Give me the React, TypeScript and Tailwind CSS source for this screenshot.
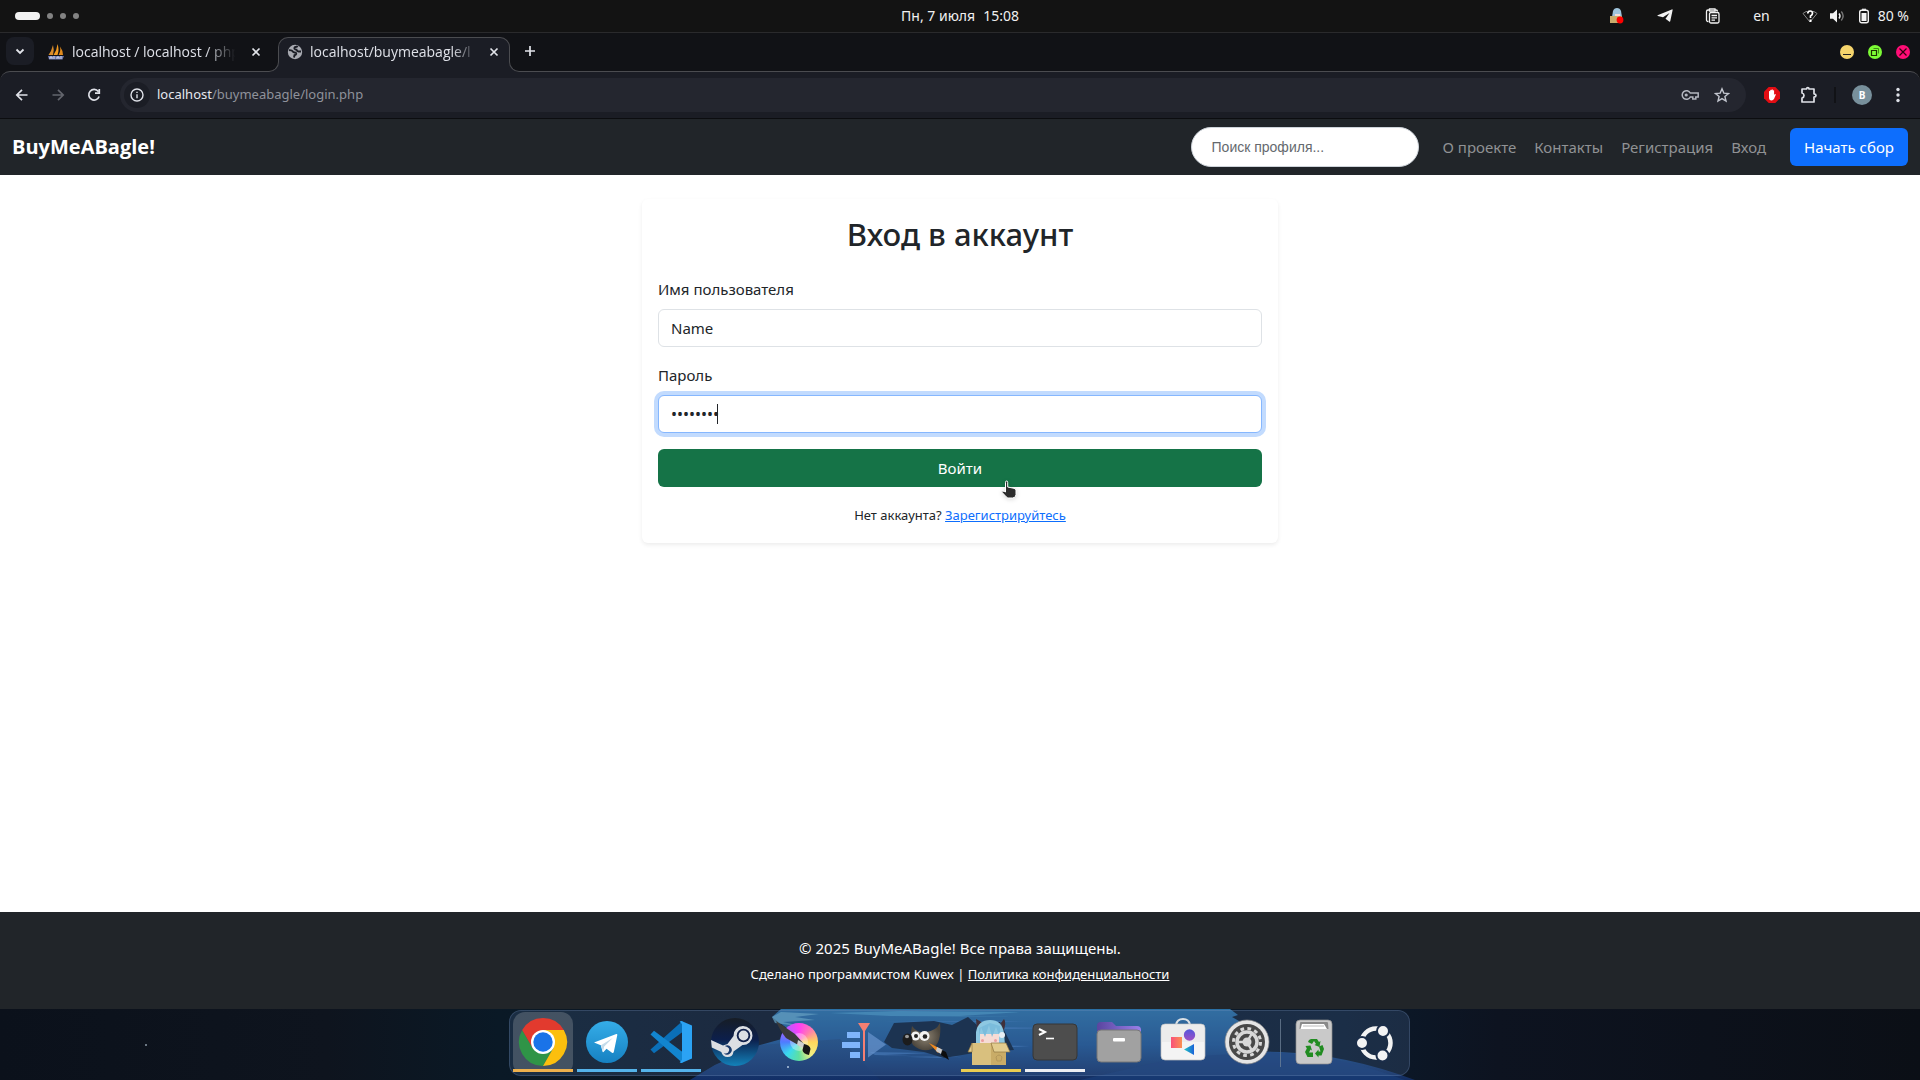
import React, { useState } from "react";

function TopBar() {
  return (
    <header className="grid h-8 shrink-0 grid-cols-3 items-center bg-[#131313] px-[15px] text-sm text-[#f0f0f0]">
      <div className="flex items-center gap-[7px]">
        <span className="h-2 w-[25px] rounded-full bg-[#f2f2f2]" />
        <span className="h-1.5 w-1.5 rounded-full bg-[#828282]" />
        <span className="h-1.5 w-1.5 rounded-full bg-[#828282]" />
        <span className="h-1.5 w-1.5 rounded-full bg-[#828282]" />
      </div>
      <div className="flex justify-center gap-2">
        <span>Пн, 7 июля</span>
        <span>15:08</span>
      </div>
      <div className="-mr-1 flex items-center justify-end">
        <svg className="mr-8 h-4 w-4" viewBox="0 0 16 16">
          <path d="M3 9 4 3Q5 0 8 0T12 3l1 6Z" fill="#9fc4dc" />
          <path d="M6 6h5v3H6Z" fill="#f2ddd6" />
          <path d="M1 8h12v7H1Z" fill="#c9ac6c" />
          <circle cx="11" cy="12" r="3.4" fill="#f00" />
        </svg>
        <svg className="mr-8 h-4 w-4" viewBox="0 0 16 16" fill="#f2f2f2">
          <path d="M.6 7.200 14.800 1.400q1-.3.8.8L13.300 13q-.3 1-1.200.4L8.500 10.700 12.500 5 6 9.200.8 7.900Q0 7.600.6 7.200Z" />
        </svg>
        <svg className="mr-8 h-4 w-4" viewBox="0 0 16 16" fill="none" stroke="#f2f2f2" strokeWidth="1.3">
          <path d="M3.500 13.500h-.5A1.500 1.500 0 0 1 1.500 12V3.500A1.500 1.500 0 0 1 3 2h1.500M10 2h1Q12.500 2 12.500 3.500M4.500 3V1H10v2Z" />
          <rect x="4.500" y="4.500" width="9.500" height="10.500" rx="1.500" />
          <path d="M6.500 7.500H12M6.500 9.800H12M6.500 12.100h3.500" />
        </svg>
        <span className="mr-8">en</span>
        <svg className="mr-3 h-4 w-4" viewBox="0 0 16 16" fill="none" stroke="#8a8a8a" strokeWidth="1">
          <path d="M5 3.300Q3 3.800 1 5.500l7 8.500 7-8.500Q13 3.800 11 3.300" />
          <path d="M5.800 5.500Q5.800 3 8.200 3t2.300 2.300Q10.500 7 8.500 8v2" stroke="#fff" strokeWidth="1.700" />
          <path d="M7.500 11.500h2v2.500h-2Z" fill="#fff" stroke="none" />
        </svg>
        <svg className="mr-3 h-4 w-4" viewBox="0 0 16 16" fill="none">
          <path d="M0 5.200h3L7 1.500v13L3 10.800H0Z" fill="#f2f2f2" />
          <path d="M9 5.500Q11 8 9 10.500" stroke="#f2f2f2" strokeWidth="1.400" />
          <path d="M11.300 3.500Q15 8 11.300 12.500" stroke="#777" strokeWidth="1.400" />
        </svg>
        <svg className="mr-2 h-4 w-3" viewBox="0 0 12 16" fill="none">
          <rect x="1.700" y="2.200" width="8.600" height="12.600" rx="2" stroke="#f2f2f2" strokeWidth="1.400" />
          <rect x="3.500" y="5" width="5" height="8" fill="#f2f2f2" />
          <path d="M4 .7h4v1.200H4Z" fill="#f2f2f2" />
        </svg>
        <span>80 %</span>
      </div>
    </header>
  );
}

function CloseIcon() {
  return (
    <svg className="h-4 w-4" viewBox="0 0 16 16" stroke="#e2e4ea" strokeWidth="1.700">
      <path d="m4.500 4.500 7 7m0-7-7 7" />
    </svg>
  );
}

function TabStrip() {
  return (
    <div className="flex h-[39px] shrink-0 items-end border-t border-[#2a2a2c] bg-[#111216] pl-1.5 font-['Open_Sans',sans-serif] text-sm text-[#dfe1e8]">
      <button aria-label="Поиск вкладок" className="mb-1.5 flex h-7 w-7 items-center justify-center rounded-lg bg-[#1b1d25]">
        <svg className="h-4 w-4" viewBox="0 0 16 16" fill="none" stroke="#e2e4ea" strokeWidth="1.800">
          <path d="m4.500 6.500 3.500 3.500 3.500-3.500" />
        </svg>
      </button>
      <div className="ml-3.5 flex h-[34px] w-[230px] items-center pb-1">
        <svg className="mr-2 h-4 w-4 shrink-0" viewBox="0 0 16 16">
          <path d="M5 1Q6.500 6 5 11H.5Q3.500 7 5 1Z" fill="#d98c2b" />
          <path d="M9.500 0q2 6 0 11H5.500Q9 6 9.500 0Z" fill="#f29b20" />
          <path d="M12 2.500q3 4 3 8.500h-4.500Q13 7 12 2.500Z" fill="#e08a1e" />
          <path d="M0 12h16l-1.500 3.500H1Z" fill="#6c78af" />
          <path d="M2 15v-2h2v2m2 0v-3m3 3v-2h2v2m2 0v-3" stroke="#d6daea" fill="none" />
        </svg>
        <span className="w-[167px] whitespace-nowrap [mask-image:linear-gradient(to_right,black_80%,transparent_98%)]">
          localhost / localhost / php
        </span>
        <button aria-label="Закрыть вкладку" className="ml-auto mr-[14px]">
          <CloseIcon />
        </button>
      </div>
      <div className="relative z-10 -mb-px flex h-[35px] w-[232px] items-center rounded-t-[10px] border border-b-0 border-[#4b4c50] bg-[#1b1d25] pb-[7px] pl-2">
        <span className="absolute -left-[10px] bottom-0 h-[10px] w-[10px] bg-[#1b1d25]">
          <span className="block h-full w-full rounded-br-[10px] border-b border-r border-[#4b4c50] bg-[#111216]" />
        </span>
        <span className="absolute -right-[10px] bottom-0 h-[10px] w-[10px] bg-[#1b1d25]">
          <span className="block h-full w-full rounded-bl-[10px] border-b border-l border-[#4b4c50] bg-[#111216]" />
        </span>
        <svg className="mr-[7px] h-4 w-4 shrink-0" viewBox="0 0 16 16">
          <circle cx="8" cy="8" r="7.200" fill="#a9abb2" />
          <path d="M2 6.200q3-.2 3.500 1t2 1.300q2 .2 1.700 1.500-.3 1-1.700 1.200l-.5 2.300M10.500 1.800q-.3 1.200-1.800 1.200-1.700.3-1.200 1.700.7 1 2 1 .5 1.800 2 1.800h2.500" fill="none" stroke="#1b1d25" strokeWidth="1.900" />
        </svg>
        <span className="w-[167px] whitespace-nowrap [mask-image:linear-gradient(to_right,black_85%,transparent)]">
          localhost/buymeabagle/l
        </span>
        <button aria-label="Закрыть вкладку" className="ml-auto mr-[7px]">
          <CloseIcon />
        </button>
      </div>
      <button aria-label="Новая вкладка" className="mb-3 ml-3">
        <svg className="h-4 w-4" viewBox="0 0 16 16" stroke="#e2e4ea" strokeWidth="1.700">
          <path d="M8 3v10M3 8h10" />
        </svg>
      </button>
      <div className="mb-3 ml-auto mr-[10px] flex gap-[14px]">
        <button aria-label="Свернуть" className="h-[14px] w-[14px]">
          <svg viewBox="0 0 14 14">
            <circle cx="7" cy="7" r="7" fill="#f5d46c" />
            <path d="M3 9.500h8" stroke="#222" />
          </svg>
        </button>
        <button aria-label="Развернуть" className="h-[14px] w-[14px]">
          <svg viewBox="0 0 14 14" fill="none" stroke="#1c3000">
            <circle cx="7" cy="7" r="7" fill="#7cfb35" stroke="none" />
            <path d="M3.500 5.500h5v5h-5Z" strokeWidth="1.200" />
            <path d="M5.500 3.500h5v5" stroke="#408a18" />
          </svg>
        </button>
        <button aria-label="Закрыть" className="h-[14px] w-[14px]">
          <svg viewBox="0 0 14 14">
            <circle cx="7" cy="7" r="7" fill="#ff0d76" />
            <path d="m3.500 3.500 7 7m0-7-7 7" stroke="#30000f" strokeWidth="1.200" />
          </svg>
        </button>
      </div>
    </div>
  );
}

function Toolbar() {
  return (
    <div className="shrink-0 bg-[#111216]">
      <div className="flex h-12 items-center rounded-t-[10px] border-b border-t border-b-[#0c0d10] border-t-[#4b4c50] bg-[#1b1d25] pl-3 pr-3">
        <button aria-label="Назад" className="mr-4">
          <svg className="h-5 w-5" viewBox="0 0 20 20" fill="none" stroke="#dfe1e8" strokeWidth="1.700">
            <path d="M15.500 10h-10M10 4.800 4.800 10l5.200 5.200" />
          </svg>
        </button>
        <button aria-label="Вперёд" className="mr-4">
          <svg className="h-5 w-5" viewBox="0 0 20 20" fill="none" stroke="#63656d" strokeWidth="1.700">
            <path d="M4.500 10h10M10 4.800l5.200 5.200-5.200 5.200" />
          </svg>
        </button>
        <button aria-label="Обновить" className="mr-4">
          <svg className="h-5 w-5" viewBox="0 0 20 20" fill="none" stroke="#dfe1e8" strokeWidth="1.700">
            <path d="M14.300 6.500A5.300 5.300 0 1 0 15.100 11.500M15.300 4v4.200H11" />
          </svg>
        </button>
        <div className="flex h-[34px] flex-1 items-center rounded-full bg-[#24262f] pl-1 pr-4">
          <button aria-label="Сведения о сайте" className="mr-[7px] flex h-[26px] w-[26px] items-center justify-center rounded-full bg-[#1b1d25]">
            <svg className="h-4 w-4" viewBox="0 0 16 16" fill="none" stroke="#dfe1e8" strokeWidth="1.400">
              <circle cx="8" cy="8" r="6" />
              <path d="M8 7.200v4M8 4.700v1.400" />
            </svg>
          </button>
          <span className="flex-1 text-[13px] text-[#8f929b]">
            <span className="text-[#e6e8ef]">localhost</span>/buymeabagle/login.php
          </span>
          <button aria-label="Пароли" className="mr-[15px]">
            <svg className="h-[18px] w-[18px]" viewBox="0 0 18 18" fill="none" stroke="#b3b6bf" strokeWidth="1.500">
              <path d="M9.300 7A4.300 4.300 0 1 0 9.300 11h2.500v2h3v-2h2.400V7Z" />
              <circle cx="5.200" cy="9" r="1.600" fill="#b3b6bf" stroke="none" />
            </svg>
          </button>
          <button aria-label="Добавить в закладки">
            <svg className="h-4 w-4" viewBox="0 0 16 16" fill="none" stroke="#c2c5ce" strokeWidth="1.400">
              <path d="m8 1.800 1.800 4.300 4.700.4-3.600 3 1.100 4.600L8 11.600l-4 2.500 1.100-4.600-3.600-3 4.700-.4Z" />
            </svg>
          </button>
        </div>
        <button aria-label="AdBlock" className="ml-[18px]">
          <svg className="h-4 w-4" viewBox="0 0 16 16">
            <path d="M4.700 0h6.600L16 4.700v6.600L11.300 16H4.700L0 11.300V4.700Z" fill="#e30d13" />
            <path d="M5 8.500V4.300q.6-.7 1.200 0V3.200q.6-.8 1.300 0v-.5q.7-.7 1.300 0v.8q.7-.6 1.300 0V8l.8-1q.9-.2.900.7l-1.700 4.100q-.8 1.600-2.600 1.600Q5 13.400 5 10.500Z" fill="#fff" />
          </svg>
        </button>
        <button aria-label="Расширения" className="ml-5">
          <svg className="h-[18px] w-[18px]" viewBox="0 0 18 18" fill="none" stroke="#dfe1e8" strokeWidth="1.700">
            <path d="M2 3h4.500q.2-1.300 1.300-1.300T9.100 3H14v4.800q2 .3 2 1.700t-2 1.700V16H2v-4q2-.5 2-2.500T2 7Z" strokeLinejoin="round" />
          </svg>
        </button>
        <span className="ml-4 h-4 w-0.5 bg-[#111216]" />
        <button aria-label="Профиль" className="ml-4 flex h-5 w-5 items-center justify-center rounded-full bg-[#78909c] text-[10px] font-bold text-white">
          B
        </button>
        <button aria-label="Меню" className="ml-4">
          <svg className="h-5 w-5" viewBox="0 0 20 20" fill="#dfe1e8">
            <circle cx="10" cy="4.500" r="1.700" />
            <circle cx="10" cy="10" r="1.700" />
            <circle cx="10" cy="15.500" r="1.700" />
          </svg>
        </button>
      </div>
    </div>
  );
}

function SiteNav() {
  return (
    <nav className="flex h-14 shrink-0 items-center bg-[#212529] px-3 text-[15px] text-[#909294]">
      <a href="#" className="mr-auto font-['Open_Sans',sans-serif] text-xl font-bold text-white">
        BuyMeABagle!
      </a>
      <input
        type="search"
        aria-label="Поиск профиля"
        placeholder="Поиск профиля..."
        className="mr-6 h-10 w-[228px] rounded-full border border-[#ced4da] bg-white px-5 font-['Liberation_Sans',sans-serif] text-sm text-[#212529] placeholder:text-[#65696e]"
      />
      <div className="flex gap-[18px]">
        <a href="#">О проекте</a>
        <a href="#">Контакты</a>
        <a href="#">Регистрация</a>
        <a href="#">Вход</a>
      </div>
      <a href="#" className="ml-6 flex h-[38px] items-center rounded-md bg-[#0d6efd] px-3.5 text-white">
        Начать сбор
      </a>
    </nav>
  );
}

function LoginCard() {
  const [name, setName] = useState("Name");
  const [password, setPassword] = useState("password");
  return (
    <form
      onSubmit={(e) => e.preventDefault()}
      className="relative mx-auto mt-6 w-[636px] max-w-full rounded-md bg-white p-4 text-[15px] text-[#212529] shadow-[0_2px_4px_rgba(0,0,0,0.075)]"
    >
      <h2 className="mb-6 text-center text-[31px] font-medium leading-[38px]">Вход в аккаунт</h2>
      <label htmlFor="username" className="mb-2 block leading-6">
        Имя пользователя
      </label>
      <input
        id="username"
        value={name}
        onChange={(e) => setName(e.target.value)}
        className="mb-4 block h-[38px] w-full rounded-md border border-[#dee2e6] bg-white px-3 leading-6"
      />
      <label htmlFor="password" className="mb-2 block leading-6">
        Пароль
      </label>
      <div className="relative mb-4">
        <input
          id="password"
          type="password"
          value={password}
          onChange={(e) => setPassword(e.target.value)}
          className="block h-[38px] w-full rounded-md border border-[#86b7fe] bg-white px-3 text-base leading-6 outline-none ring-4 ring-[#c2dbfe]"
        />
        <span className="absolute left-[59px] top-[9px] h-5 w-px bg-[#212529]" />
      </div>
      <div className="relative">
        <button type="submit" className="block h-[38px] w-full rounded-md bg-[#157347] text-white">
          Войти
        </button>
        <svg className="absolute left-[342px] top-[31px] h-5 w-[18px] drop-shadow-sm" viewBox="0 0 18 20">
          <path
            d="M5.500 12V2.300Q5.500 1 6.600 1T7.700 2.300V7l6.300 1.300q2 .5 2 2.400v3.800q0 3.500-3.500 3.500H8.700q-1.500 0-2.500-1.200L1.700 12q.9-1.500 2.500-.6Z"
            fill="#2c2c2c"
            stroke="#fff"
            strokeWidth="1"
          />
        </svg>
      </div>
      <p className="mt-4 text-center text-[13px] leading-6">
        Нет аккаунта?{" "}
        <a href="#" className="text-[#0d6efd] underline">
          Зарегистрируйтесь
        </a>
      </p>
    </form>
  );
}

function SiteFooter() {
  return (
    <footer className="h-[97px] shrink-0 bg-[#212529] pt-6 text-center text-white">
      <p className="text-[15px] leading-6">© 2025 BuyMeABagle! Все права защищены.</p>
      <p className="mt-1 text-[13px] leading-5">
        Сделано программистом Kuwex |{" "}
        <a href="#" className="underline">
          Политика конфиденциальности
        </a>
      </p>
    </footer>
  );
}

function Wallpaper() {
  return (
    <svg className="absolute inset-0 h-full w-full" viewBox="0 0 1920 71" preserveAspectRatio="xMidYMid slice" aria-hidden="true">
      <defs>
        <linearGradient id="night">
          <stop offset="0" stopColor="#0b111b" />
          <stop offset=".17" stopColor="#0e141e" />
          <stop offset=".26" stopColor="#0a1926" />
          <stop offset=".4" stopColor="#0c1522" />
          <stop offset=".7" stopColor="#0b1a2b" />
          <stop offset=".78" stopColor="#0d1320" />
          <stop offset="1" stopColor="#0b0f16" />
        </linearGradient>
        <linearGradient id="lake" x2="0" y2="1">
          <stop offset="0" stopColor="#2a70a4" />
          <stop offset=".5" stopColor="#1e5490" />
          <stop offset="1" stopColor="#142d60" />
        </linearGradient>
        <linearGradient id="shore" x2="0" y2="1">
          <stop offset="0" stopColor="#1f4778" />
          <stop offset="1" stopColor="#12306a" />
        </linearGradient>
      </defs>
      <rect width="1920" height="71" fill="url(#night)" />
      <path d="M690 71 715 56 760 36 796 26 772 8 781 0h449l8 6-6 2 14 8-6 3 8 12-12 11 44 1q65 2 135 28Z" fill="url(#lake)" />
      <path d="M690 71 715 56 760 36 840 30 880 71Z" fill="url(#shore)" opacity=".6" />
      <path d="M1080 71 1180 48 1270 43q65 2 135 28Z" fill="#183d78" opacity=".7" />
      <path d="M772 8 781 3l38 2-24 3 20 3-32 2 22 5-30-4Z" fill="#6fb2cf" opacity=".7" />
      <path d="M830 4 900 2 1020 3 960 7 1040 8 890 7Z" fill="#54a6cf" opacity=".6" />
      <path d="M880 12h150l-40 1Zm100 6 80 1-60 1ZM870 43l60 1-45 2 80 3-90-3Zm100-7 60 1-30 2ZM910 48l50-1-20 2Z" fill="#4b83c7" opacity=".6" />
      <path d="m884 33 10-19 40-2 18 4 16-8 10 9 22-4 14 28-40 3-30 5-20-6-32-4Z" fill="#0d2038" />
      <circle cx="146" cy="36" r="1" fill="#8a98a5" />
      <circle cx="788" cy="58" r="1" fill="#d3e6f7" />
    </svg>
  );
}

function DockItem({ label, bar, active, children }: { label: string; bar?: string; active?: boolean; children: React.ReactNode }) {
  return (
    <button
      aria-label={label}
      className={"flex h-[60px] w-[60px] shrink-0 flex-col items-center pt-1.5 " + (active ? "rounded-t-xl rounded-b-lg bg-[#566270]/70" : "")}
    >
      <svg className="h-12 w-12 shrink-0 overflow-visible" viewBox="0 0 48 48">
        {children}
      </svg>
      <span className={"mt-[3px] h-[3px] w-full shrink-0 " + (bar ?? "")} />
    </button>
  );
}

function Dock() {
  return (
    <div className="relative flex h-[71px] shrink-0 justify-center overflow-hidden bg-[#0c121c] pr-0.5 pt-px">
      <Wallpaper />
      <div className="relative flex h-[66px] items-start rounded-xl border border-[#7f9dc8]/25 bg-[#4a6a9a]/25 px-[3px] pt-px">
        <div className="flex gap-1">
          <DockItem label="Chrome" bar="bg-[#edb04d]" active>
            <path d="M3.200 12A24 24 0 0 0 24 48L34.400 30 24 24 13.600 30Z" fill="#2f9447" />
            <path d="M44.800 12A24 24 0 0 1 24 48L34.400 30 24 12Z" fill="#fcbf0e" />
            <path d="M3.200 12A24 24 0 0 1 44.800 12H24L13.600 30Z" fill="#e23a2e" />
            <circle cx="24" cy="24" r="12" fill="#fff" />
            <circle cx="24" cy="24" r="9.700" fill="#1a73e8" />
          </DockItem>
          <DockItem label="Telegram" bar="bg-[#55b3ea]">
            <defs>
              <linearGradient id="tg" x2="0" y2="1">
                <stop stopColor="#35ade8" />
                <stop offset="1" stopColor="#1681c2" />
              </linearGradient>
            </defs>
            <circle cx="24" cy="24" r="21" fill="url(#tg)" />
            <path d="M11 24.500 33.300 16q1.200-.2 1 1l-3.500 17q-.5 1.500-1.800.7L23.500 30.800 20.500 34q-.8.500-1-.5L17.800 27.200Z" fill="#fff" />
            <path d="M18 27.200 30 19.800 21.200 28.500 20 33.500Z" fill="#c5dcea" />
          </DockItem>
          <DockItem label="Visual Studio Code" bar="bg-[#55b3ea]">
            <path d="M35.500 3 3.500 31.500 7 35.200 35.500 14Z" fill="#0a6fb8" />
            <path d="M35.500 45 3.500 16.500 7 12.800 35.500 34Z" fill="#1285cf" />
            <path d="M34.500 3 45 7.500v33L34.500 45q-1 .2-1.800-.8L35 42V6l-2.300-2.200Q33.500 2.800 34.500 3Z" fill="#2ba3f4" />
          </DockItem>
          <DockItem label="Steam">
            <defs>
              <linearGradient id="steam" x2="0" y2="1">
                <stop stopColor="#171d25" />
                <stop offset=".45" stopColor="#0c1f4c" />
                <stop offset="1" stopColor="#1382ba" />
              </linearGradient>
            </defs>
            <circle cx="24" cy="24" r="24" fill="url(#steam)" />
            <path d="M0 22 12 27.500 16.500 26 22.500 18a9.500 9.500 0 1 1 9 9l-9 6.500q-.5 5.500-6 5.500-4.800 0-6.200-5L.8 29.500Z" fill="#dcdfe3" />
            <circle cx="32.500" cy="17.500" r="6.800" fill="#10204a" />
            <circle cx="32.500" cy="17.500" r="4.900" fill="#dcdfe3" />
            <path d="M12.800 35.200a4.600 4.600 0 1 0 1-7.200l2.400 1.100a3.300 3.300 0 0 1-1.500 6.300Z" fill="#17396b" />
          </DockItem>
          <DockItem label="Krita">
            <foreignObject x="5" y="5" width="38" height="38">
              <div className="h-full w-full rounded-full bg-[conic-gradient(#ff3ef5,#ff7ab0,#ffd75c,#f4ee80,#5ee0a0,#3ad9ee,#4f7bff,#b35cff,#ff3ef5)]" />
            </foreignObject>
            <circle cx="24" cy="24" r="9" fill="#fff" opacity=".35" />
            <path d="M1 3 20 16 29 26 25 28 11 20Q4 11 1 3Z" fill="#3a3a3a" />
            <path d="m23 22 7 4-2 4-6-3Z" fill="#cfcfcf" />
            <path d="M29 26q6 1 6.500 5l-1.500 6q-6-1-6.500-5Z" fill="#161616" />
          </DockItem>
          <DockItem label="Таймер задач">
            <path d="M8 14h13v6H8ZM3 24h18v6H3ZM11 34h10v6H11Z" fill="#7fb5fb" />
            <path d="M29 14 47 26.500 29 39.500Z" fill="#6a96cf" opacity=".7" />
            <path d="M19 5h12l-5 8v30h-2V13Z" fill="#f57f72" />
          </DockItem>
          <DockItem label="GIMP">
            <defs>
              <radialGradient id="gimp">
                <stop stopColor="#8c8271" />
                <stop offset="1" stopColor="#4c463d" />
              </radialGradient>
            </defs>
            <path d="M9 8Q15 16 23 14 33 13 37 5q2 20-8 26-10 4-19-4Q6 22 9 8Z" fill="url(#gimp)" />
            <circle cx="12.500" cy="18" r="4.500" fill="#f2f2f2" />
            <circle cx="21.500" cy="18" r="5" fill="#f2f2f2" />
            <circle cx="13" cy="18" r="2" fill="#222" />
            <circle cx="22" cy="18.500" r="2.300" fill="#222" />
            <ellipse cx="4.500" cy="21.500" rx="5" ry="6" fill="#1c1c1c" />
            <ellipse cx="4" cy="18.500" rx="2" ry="1.800" fill="#999" />
            <path d="m26 25 12 6-3 4Z" fill="#f08a20" />
            <path d="m34 29 6 3-2 4-5-3Z" fill="#ccc" />
            <path d="m39 32 4 2 3 8-8-5Z" fill="#0d0d0d" />
          </DockItem>
          <DockItem label="Коробка" bar="bg-[#e9cc52]">
            <path d="M9 1 18 6 10 12ZM34 5l3-4q3 4-1 13Z" fill="#41303a" />
            <path d="M9 27V14Q11 2 23 2t14 13l1 12Z" fill="#8ec8e2" />
            <path d="M13 16h19v9H13Z" fill="#f6dcd5" />
            <path d="M12 19 14 9l4 10 4-12 3 12 4-10 4 10V8L23 5 12 10Z" fill="#7bbcdc" />
            <circle cx="15.500" cy="22.500" r="1.500" fill="#eb9e9e" />
            <circle cx="28.500" cy="22.500" r="1.500" fill="#eb9e9e" />
            <circle cx="35" cy="17" r="3" fill="#e8f0f5" />
            <path d="M5 25h19v22H5Z" fill="#d9c07e" />
            <path d="M24 25h15v22H24Z" fill="#c9ac67" />
            <path d="m5 25-4 9h4ZM24 25h15l4 9H27Z" fill="#e2cc8e" stroke="#8f7640" strokeWidth=".7" />
            <path d="M29 39q3-4 6 0l-1 4h-4Z" fill="none" stroke="#b3975a" />
          </DockItem>
          <DockItem label="Терминал" bar="bg-[#eceef3]">
            <rect x="2" y="6" width="44" height="36" rx="4" fill="#4d4d4d" stroke="#363636" />
            <path d="m8 11 6 3-6 3" fill="none" stroke="#fff" strokeWidth="2" />
            <path d="M15 20.500h8" stroke="#fff" strokeWidth="1.600" />
          </DockItem>
          <DockItem label="Файлы">
            <defs>
              <linearGradient id="folder">
                <stop stopColor="#5a459f" />
                <stop offset="1" stopColor="#9a80ea" />
              </linearGradient>
            </defs>
            <path d="M2 8q0-4 4-4h11l4 4h21q4 0 4 4v8H2Z" fill="url(#folder)" />
            <rect x="2" y="12" width="44" height="32" rx="4" fill="#a1a1a1" stroke="#777" />
            <rect x="18" y="20" width="12" height="3.500" rx="1" fill="#fff" />
          </DockItem>
          <DockItem label="Магазин приложений">
            <defs>
              <linearGradient id="appRed">
                <stop stopColor="#f9507a" />
                <stop offset="1" stopColor="#fb9052" />
              </linearGradient>
              <linearGradient id="appViolet" x2="0" y2="1">
                <stop stopColor="#5357dd" />
                <stop offset="1" stopColor="#a04fc4" />
              </linearGradient>
              <linearGradient id="appBlue">
                <stop stopColor="#1fc7c2" />
                <stop offset="1" stopColor="#1b62d8" />
              </linearGradient>
            </defs>
            <path d="M17 7q1-6 7-6t7 6" fill="none" stroke="#dce1e5" strokeWidth="2" />
            <rect x="2" y="6" width="44" height="36" rx="4" fill="#f4f4f4" stroke="#bbb" strokeWidth=".7" />
            <path d="M3 7h42v17H3Z" fill="#e4e4e4" opacity=".5" />
            <path d="M12 19h11v11H12Z" fill="url(#appRed)" />
            <circle cx="30.500" cy="17" r="5.700" fill="url(#appViolet)" />
            <path d="M25 31.500 35 26v11Z" fill="url(#appBlue)" />
          </DockItem>
          <DockItem label="Настройки">
            <circle cx="24" cy="24" r="22" fill="#e5e5e5" stroke="#888" strokeWidth=".7" />
            <circle cx="24" cy="24" r="18" fill="#484848" />
            <circle cx="24" cy="24" r="13.500" fill="none" stroke="#d8d8d8" strokeWidth="3" strokeDasharray="3.700 3.370" />
            <circle cx="24" cy="24" r="10" fill="none" stroke="#d8d8d8" strokeWidth="3.500" />
            <path d="M24 24h-10m10 0 5-8.700M24 24l5 8.700" stroke="#d8d8d8" strokeWidth="2.500" />
            <circle cx="24" cy="24" r="4.500" fill="#d8d8d8" />
          </DockItem>
        </div>
        <span className="mx-[3px] mt-[7px] h-12 w-px bg-[#74889b]/70" />
        <div className="flex gap-0.5">
          <DockItem label="Корзина">
            <rect x="6" y="2" width="36" height="44" rx="4" fill="#c9c9c9" stroke="#8c8c8c" strokeWidth=".7" />
            <path d="M10 5q0-1 1-1h26q1 0 1 1l.500 6h-29Z" fill="#8a8a8a" />
            <path d="M12 6h22l3 5H10.500Z" fill="#fff" />
            <path d="M13 8h21" stroke="#bbb" />
            <g fill="#218c21">
              <path d="m19 22 2-1h6l2 3 1.500-1-1 6-5-2 1.500-1-2-3-2 3-4-2Z" />
              <path d="m15.500 28 5-.5 1.500 5-1.500-1-1.500 3h4V39h-5.500L15 34l1.800-3.500Z" />
              <path d="m29 28.500 3.500-1.500 1.500 4-2.500 6.500h-3V39.500l-3.500-4 3.500-4v2h2Z" />
            </g>
          </DockItem>
          <DockItem label="Показать приложения">
            <circle cx="24" cy="25" r="14.500" fill="none" stroke="#f3f3f3" strokeWidth="4.500" />
            <g fill="#f3f3f3" stroke="#1b2d49" strokeWidth="2">
              <circle cx="10" cy="25" r="6" />
              <circle cx="31" cy="13" r="6" />
              <circle cx="30.500" cy="37.500" r="6" />
            </g>
          </DockItem>
        </div>
      </div>
    </div>
  );
}

export default function App() {
  return (
    <div className="flex h-screen flex-col overflow-hidden bg-white font-['Noto_Sans',sans-serif]">
      <TopBar />
      <TabStrip />
      <Toolbar />
      <SiteNav />
      <main className="flex-1">
        <LoginCard />
      </main>
      <SiteFooter />
      <Dock />
    </div>
  );
}
